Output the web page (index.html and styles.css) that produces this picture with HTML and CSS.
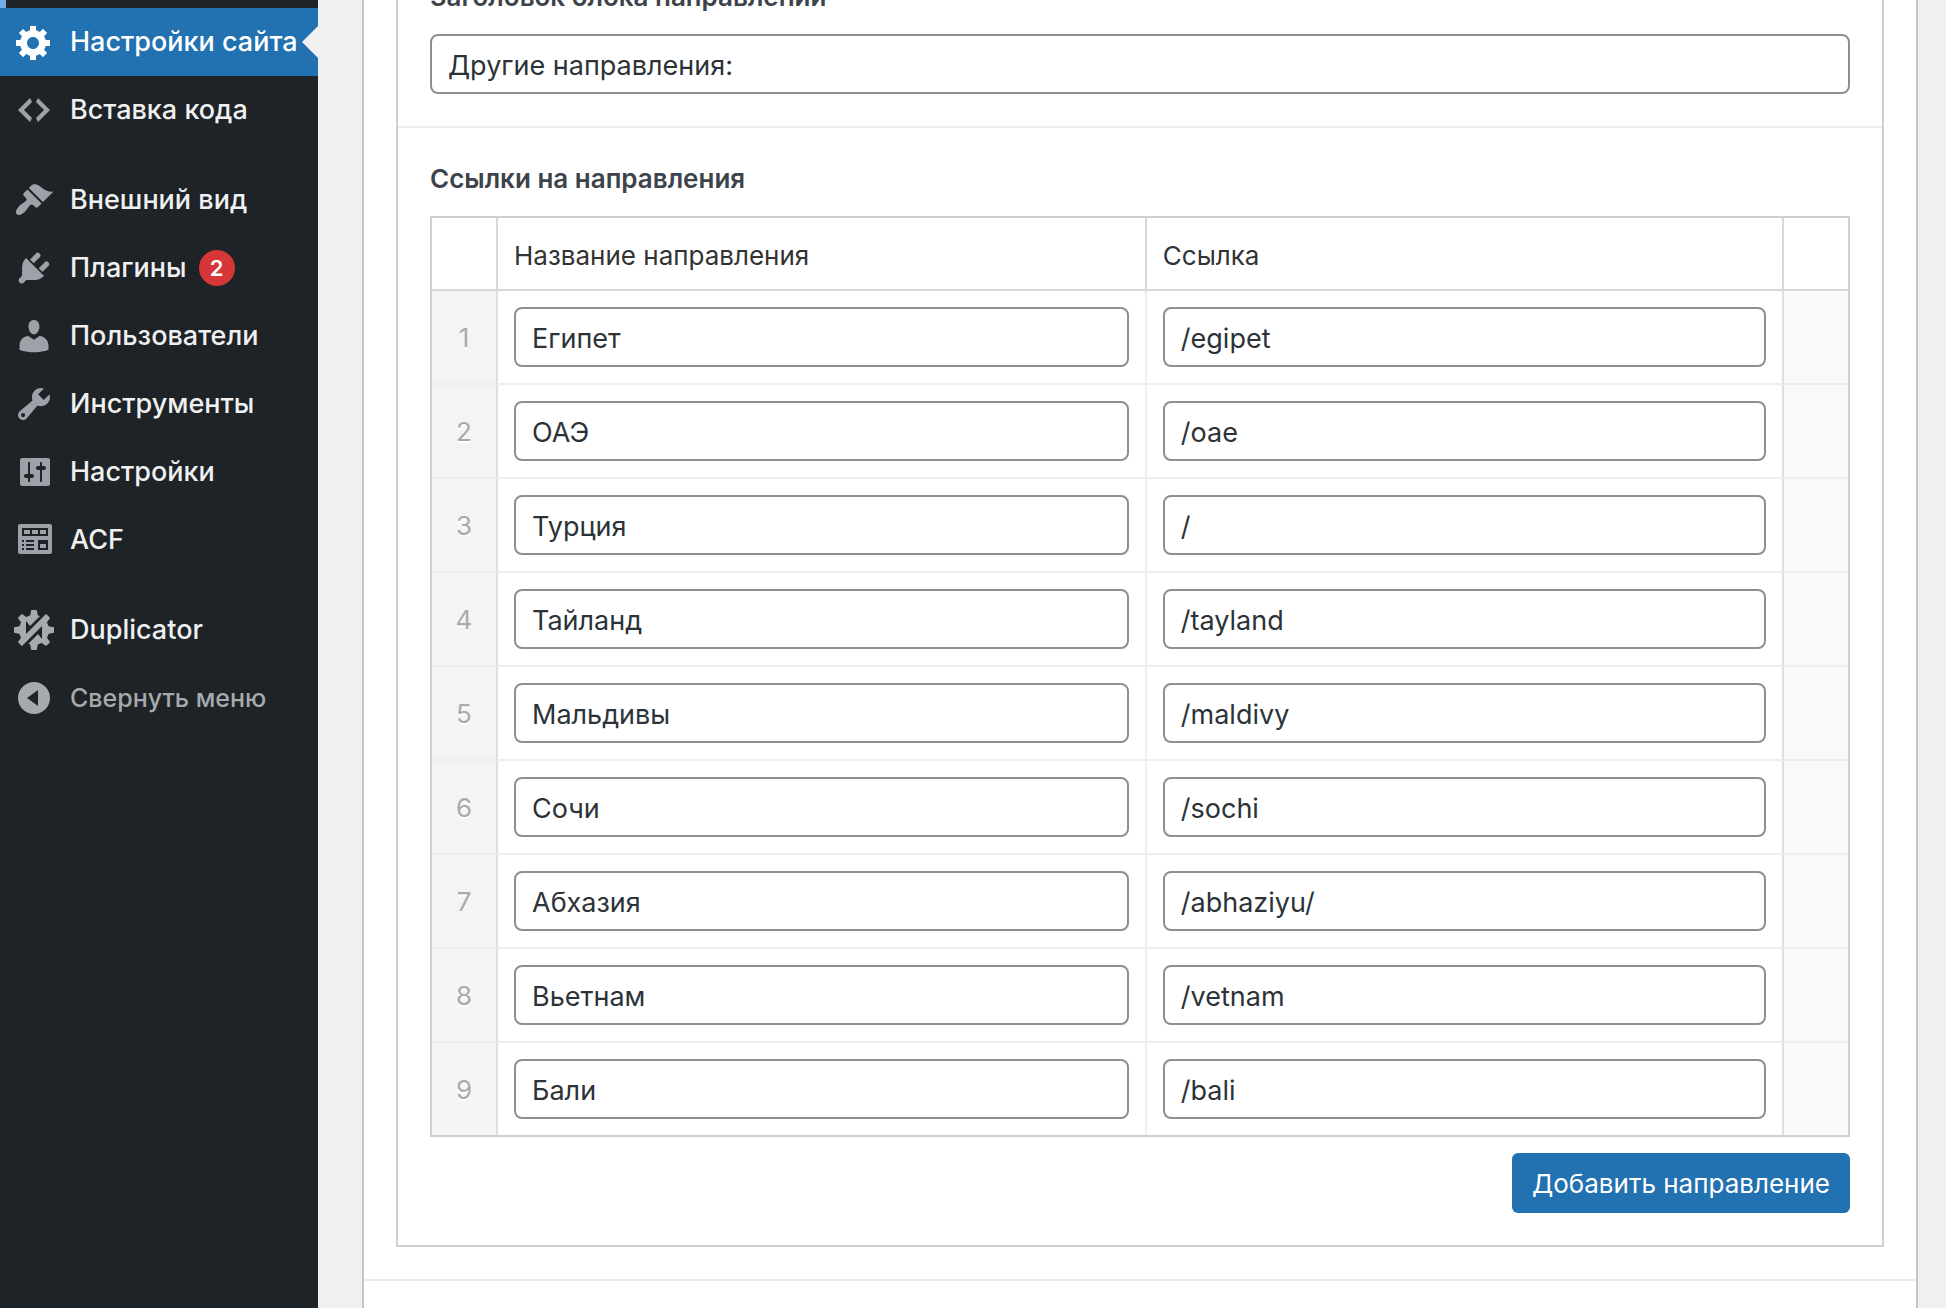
FILE: index.html
```html
<!DOCTYPE html>
<html lang="ru">
  <head>
    <meta charset="UTF-8" />
    <meta name="viewport" content="width=device-width, initial-scale=1.0" />
    <title>Настройки сайта</title>
    <link rel="stylesheet" href="styles.css">
  </head>
  <body>
    <nav class="sidebar">
      <div class="menu-end"></div>
      <ul class="menu">
        <li>
          <a class="menu-item current" href="#">
            <svg class="icon" viewBox="0 0 20 20"><path d="M18 12h-2.18c-.17.7-.44 1.35-.81 1.93l1.54 1.54-2.1 2.1-1.54-1.54c-.58.36-1.23.63-1.91.79V19H8v-2.18c-.68-.16-1.33-.43-1.91-.79l-1.54 1.54-2.12-2.12 1.54-1.54c-.36-.58-.63-1.23-.79-1.91H1V9.03h2.17c.16-.7.44-1.35.8-1.94L2.43 5.55l2.1-2.1 1.54 1.54c.58-.37 1.24-.64 1.93-.81V2h3v2.18c.68.16 1.33.43 1.91.79l1.54-1.54 2.12 2.12-1.54 1.54c.36.59.64 1.24.8 1.94H18V12zm-8.5 1.5c1.66 0 3-1.34 3-3s-1.34-3-3-3-3 1.34-3 3 1.34 3 3 3z"/></svg>
            <span>Настройки сайта</span>
          </a>
        </li>
        <li>
          <a class="menu-item" href="#">
            <svg class="icon" viewBox="0 0 20 20"><path d="M9 6l-4 4 4 4-1 2-6-6 6-6zm2 8l4-4-4-4 1-2 6 6-6 6z"/></svg>
            <span>Вставка кода</span>
          </a>
        </li>
        <li class="separator"></li>
        <li>
          <a class="menu-item" href="#">
            <svg class="icon" viewBox="0 0 20 20"><path d="M14.48 11.06L7.41 3.99l1.5-1.5c.5-.56 2.3-.47 3.51.32 1.21.8 1.43 1.28 2.91 2.1 1.18.64 2.45 1.26 4.45.85zm-.71.71L6.7 4.7 4.93 6.47c-.39.39-.39 1.02 0 1.41l1.06 1.06c.39.39.39 1.03 0 1.42-.6.6-1.43 1.11-2.21 1.69-.35.26-.7.53-1.01.84C1.43 14.23.4 16.08 1.4 17.07c.99 1 2.84-.03 4.18-1.36.31-.31.58-.66.85-1.02.57-.78 1.08-1.61 1.69-2.21.39-.39 1.02-.39 1.41 0l1.06 1.06c.39.39 1.02.39 1.41 0z"/></svg>
            <span>Внешний вид</span>
          </a>
        </li>
        <li>
          <a class="menu-item" href="#">
            <svg class="icon" viewBox="0 0 20 20"><path d="M13.11 4.36L9.87 7.6 8 5.73l3.24-3.24c.35-.34 1.05-.2 1.56.32.52.51.66 1.21.31 1.55zm-8 1.77l.91-1.12 9.01 9.01-1.19.84c-.71.71-2.63 1.16-3.82 1.16H6.14L4.9 17.26c-.59.59-1.54.59-2.12 0-.59-.58-.59-1.53 0-2.12l1.24-1.24v-3.88c0-1.13.4-3.19 1.09-3.89zm7.26 3.97l3.24-3.24c.34-.35 1.04-.21 1.55.31.52.51.66 1.21.31 1.55l-3.24 3.25z"/></svg>
            <span>Плагины</span>
            <span class="badge">2</span>
          </a>
        </li>
        <li>
          <a class="menu-item" href="#">
            <svg class="icon" viewBox="0 0 20 20"><path d="M10 9.25c-2.27 0-2.73-3.44-2.73-3.44C7 4.02 7.82 2 9.97 2c2.16 0 2.98 2.02 2.71 3.81 0 0-.41 3.44-2.68 3.44zm0 2.57L12.72 10c2.39 0 4.52 2.33 4.52 4.53v2.49s-3.65 1.13-7.24 1.13c-3.65 0-7.24-1.13-7.24-1.13v-2.49c0-2.25 1.94-4.48 4.47-4.48z"/></svg>
            <span>Пользователи</span>
          </a>
        </li>
        <li>
          <a class="menu-item" href="#">
            <svg class="icon" viewBox="0 0 20 20"><path d="M16.68 9.77c-1.34 1.34-3.3 1.67-4.95.99l-5.41 6.52c-.99.99-2.59.99-3.58 0s-.99-2.59 0-3.57l6.52-5.42c-.68-1.65-.35-3.61.99-4.95 1.28-1.28 3.12-1.62 4.72-1.06l-2.89 2.89 2.82 2.82 2.86-2.87c.53 1.58.18 3.39-1.08 4.65zM3.81 16.21c.4.39 1.04.39 1.43 0 .4-.4.4-1.04 0-1.43-.39-.4-1.03-.4-1.43 0-.39.39-.39 1.03 0 1.43z"/></svg>
            <span>Инструменты</span>
          </a>
        </li>
        <li>
          <a class="menu-item" href="#">
            <svg class="icon" viewBox="0 0 20 20"><path d="M18 16V4c0-.55-.45-1-1-1H4c-.55 0-1 .45-1 1v12c0 .55.45 1 1 1h13c.55 0 1-.45 1-1zM8 11h1c.55 0 1 .45 1 1s-.45 1-1 1H8v1.5c0 .28-.22.5-.5.5s-.5-.22-.5-.5V13H6c-.55 0-1-.45-1-1s.45-1 1-1h1V5.500c0-.28.22-.5.5-.5s.5.22.5.5V11zm5-2h-1c-.55 0-1-.45-1-1s.45-1 1-1h1V5.500c0-.28.22-.5.5-.5s.5.22.5.5V7h1c.55 0 1 .45 1 1s-.45 1-1 1h-1v5.500c0 .28-.22.5-.5.5s-.5-.22-.5-.5V9z"/></svg>
            <span>Настройки</span>
          </a>
        </li>
        <li>
          <a class="menu-item" href="#">
            <svg class="icon" viewBox="0 0 20 20"><path fill-rule="evenodd" d="M3 2h15c.55 0 1 .45 1 1v13c0 .55-.45 1-1 1H3c-.55 0-1-.45-1-1V3c0-.55.45-1 1-1zm1 2v4h13V4zM4 10v1h1v-1zm0 2v1h1v-1zm0 2v1h1v-1zm2-4v1h4v-1zm0 2v1h4v-1zm0 2v1h4v-1zm6-4v5h5v-5z"/><path d="M5 5h3v2H5zM9 5h3v2H9zM13 5h3v2h-3zM13 12h3v2h-3z"/></svg>
            <span>ACF</span>
          </a>
        </li>
        <li class="separator"></li>
        <li>
          <a class="menu-item" href="#">
            <svg class="icon icon-light" viewBox="0 0 40 40">
              <circle cx="20" cy="20" r="15"/>
              <path id="tooth" d="M15 7c1.500-1 1.500-3 2-6 0-.6.500-1 1-1h4c.500 0 1 .4 1 1 .500 3 .500 5 2 6z"/>
              <use href="#tooth" transform="rotate(45 20 20)"/>
              <use href="#tooth" transform="rotate(90 20 20)"/>
              <use href="#tooth" transform="rotate(135 20 20)"/>
              <use href="#tooth" transform="rotate(180 20 20)"/>
              <use href="#tooth" transform="rotate(225 20 20)"/>
              <use href="#tooth" transform="rotate(270 20 20)"/>
              <use href="#tooth" transform="rotate(315 20 20)"/>
              <path class="cut" d="M12 11l4 5L27 5l4 0-19 19zM28 29l-4-5-11 11-4 0 19-19z"/>
            </svg>
            <span>Duplicator</span>
          </a>
        </li>
        <li>
          <button class="menu-item collapse" type="button">
            <svg class="icon icon-light" viewBox="0 0 40 40"><path fill-rule="evenodd" d="M20 4a16 16 0 1 0 0 32 16 16 0 1 0 0-32zm4 8v16l-11-8z"/></svg>
            <span>Свернуть меню</span>
          </button>
        </li>
      </ul>
    </nav>

    <main class="content">
      <section class="postbox">
        <div class="group">
          <div class="field field-title">
            <label class="label" for="block-title">Заголовок блока направлений</label>
            <input class="input" id="block-title" type="text" value="Другие направления:">
          </div>
          <div class="field field-links">
            <h2 class="label">Ссылки на направления</h2>
            <table class="repeater">
              <thead>
                <tr>
                  <th class="handle"></th>
                  <th id="name">Название направления</th>
                  <th class="col-link" id="link">Ссылка</th>
                  <th class="handle"></th>
                </tr>
              </thead>
              <tbody>
                <tr>
                  <td class="order">1</td>
                  <td><input class="input" type="text" aria-labelledby="name" value="Египет"></td>
                  <td><input class="input" type="text" aria-labelledby="link" value="/egipet"></td>
                  <td class="remove"></td>
                </tr>
                <tr>
                  <td class="order">2</td>
                  <td><input class="input" type="text" aria-labelledby="name" value="ОАЭ"></td>
                  <td><input class="input" type="text" aria-labelledby="link" value="/oae"></td>
                  <td class="remove"></td>
                </tr>
                <tr>
                  <td class="order">3</td>
                  <td><input class="input" type="text" aria-labelledby="name" value="Турция"></td>
                  <td><input class="input" type="text" aria-labelledby="link" value="/"></td>
                  <td class="remove"></td>
                </tr>
                <tr>
                  <td class="order">4</td>
                  <td><input class="input" type="text" aria-labelledby="name" value="Тайланд"></td>
                  <td><input class="input" type="text" aria-labelledby="link" value="/tayland"></td>
                  <td class="remove"></td>
                </tr>
                <tr>
                  <td class="order">5</td>
                  <td><input class="input" type="text" aria-labelledby="name" value="Мальдивы"></td>
                  <td><input class="input" type="text" aria-labelledby="link" value="/maldivy"></td>
                  <td class="remove"></td>
                </tr>
                <tr>
                  <td class="order">6</td>
                  <td><input class="input" type="text" aria-labelledby="name" value="Сочи"></td>
                  <td><input class="input" type="text" aria-labelledby="link" value="/sochi"></td>
                  <td class="remove"></td>
                </tr>
                <tr>
                  <td class="order">7</td>
                  <td><input class="input" type="text" aria-labelledby="name" value="Абхазия"></td>
                  <td><input class="input" type="text" aria-labelledby="link" value="/abhaziyu/"></td>
                  <td class="remove"></td>
                </tr>
                <tr>
                  <td class="order">8</td>
                  <td><input class="input" type="text" aria-labelledby="name" value="Вьетнам"></td>
                  <td><input class="input" type="text" aria-labelledby="link" value="/vetnam"></td>
                  <td class="remove"></td>
                </tr>
                <tr>
                  <td class="order">9</td>
                  <td><input class="input" type="text" aria-labelledby="name" value="Бали"></td>
                  <td><input class="input" type="text" aria-labelledby="link" value="/bali"></td>
                  <td class="remove"></td>
                </tr>
              </tbody>
            </table>
            <div class="actions">
              <button class="button" type="button">Добавить направление</button>
            </div>
          </div>
        </div>
      </section>
    </main>
  </body>
</html>
```

FILE: styles.css
```css
* {
  box-sizing: border-box;
}

body {
  display: flex;
  min-height: 100vh;
  margin: 0;
  overflow-x: hidden;
  font-family: Inter, "Liberation Sans", sans-serif;
  font-size: 26px;
  color: #3c434a;
  background-color: #f0f0f1;
}

.sidebar {
  flex: 0 0 318px;
  background-color: #1d2327;
}

/* tail of the submenu above the current item */
.menu-end {
  height: 8px;
  border-left: 6px solid #72aee6;
}

.menu {
  margin: 0;
  padding: 0;
  list-style: none;
}

.menu-item {
  position: relative;
  display: flex;
  align-items: center;
  gap: 16px;
  width: 100%;
  height: 68px;
  padding: 0 0 0 14px;
  border: 0;
  font-family: inherit;
  font-size: 27px;
  font-weight: 500;
  line-height: 36px;
  white-space: nowrap;
  text-decoration: none;
  color: #f0f0f1;
  background-color: transparent;
  cursor: pointer;
}

.menu-item.current {
  color: #fff;
  background-color: #2271b1;
}

.menu-item.current::after {
  content: "";
  position: absolute;
  top: 50%;
  right: 0;
  border: 16px solid transparent;
  border-right-color: #f0f0f1;
  border-left-width: 0;
  transform: translateY(-50%);
}

.menu-item.collapse {
  font-size: 25px;
  color: #a7aaad;
}

.separator {
  height: 22px;
}

.icon {
  flex: none;
  width: 40px;
  height: 40px;
  fill: #9ca2a7;
}

.current .icon {
  fill: #fff;
}

.icon-light {
  fill: #a7aaad;
}

.icon .cut {
  fill: #1d2327;
}

.badge {
  width: 36px;
  height: 36px;
  margin-left: -4px;
  border-radius: 50%;
  font-size: 22px;
  font-weight: 600;
  text-align: center;
  color: #fff;
  background-color: #d63638;
}

.content {
  display: flex;
  flex: 1;
  min-width: 0;
  padding: 0 28px 0 44px;
}

.postbox {
  flex: 1;
  min-width: 0;
  border: solid #c3c4c7;
  border-width: 0 2px;
  background-color: #fff;
}

.group {
  margin: 0 32px 32px;
  border: 2px solid #ccd0d4;
  border-top: 0;
}

/* divider under the group, across the whole box */
.postbox::after {
  content: "";
  display: block;
  border-top: 2px solid #eaecf0;
}

.field {
  padding: 32px;
}

.field-title {
  margin-top: -54px;
  border-bottom: 2px solid #eaecf0;
}

.label {
  display: block;
  margin: 0 0 18px;
  font-size: 26px;
  font-weight: 600;
  line-height: 38px;
}

.input {
  display: block;
  width: 100%;
  height: 60px;
  padding: 2px 16px 0;
  border: 2px solid #8c8f94;
  border-radius: 8px;
  font-family: inherit;
  font-size: 27px;
  color: #2c3338;
  background-color: #fff;
}

.repeater {
  width: 100%;
  border: 2px solid #ccd0d4;
  border-spacing: 0;
  table-layout: fixed;
}

.repeater th,
.repeater td {
  padding: 16px;
}

.repeater th {
  height: 73px;
  padding: 20px 16px 16px;
  border-bottom: 2px solid #d5d9dd;
  font-size: 26px;
  font-weight: 400;
  line-height: 32px;
  text-align: left;
  color: #333;
}

.repeater th + th {
  border-left: 2px solid #d5d9dd;
}

.repeater td {
  border-bottom: 2px solid #eee;
}

.repeater td + td {
  border-left: 2px solid #eee;
}

.repeater .order + td,
.repeater td.remove {
  border-left-color: #dfdfdf;
}

.repeater tr:last-child td {
  border-bottom: 0;
}

.handle {
  width: 66px;
}

.handle:first-child {
  width: 64px;
}

.col-link {
  width: 45%;
}

.repeater .order {
  padding: 0;
  font-size: 26px;
  text-align: center;
  color: #aaa;
  background-color: #f4f4f4;
  text-shadow: 0 2px 0 #fff;
}

.repeater .remove {
  background-color: #f9f9f9;
}

.actions {
  display: flex;
  justify-content: flex-end;
  margin-top: 16px;
}

.button {
  height: 60px;
  padding: 0 20px;
  border: 0;
  border-radius: 6px;
  font-family: inherit;
  font-size: 26px;
  color: #fff;
  background-color: #2271b1;
  cursor: pointer;
}
```
